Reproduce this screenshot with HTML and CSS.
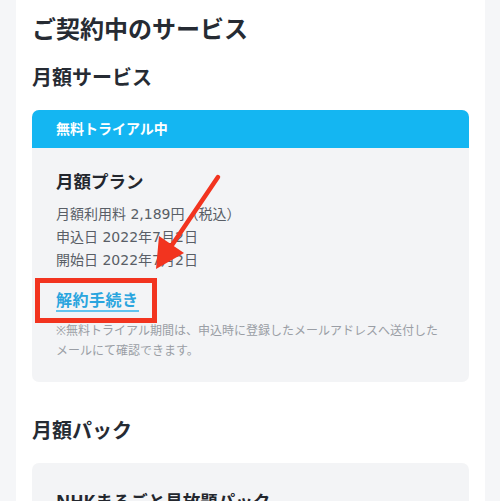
FILE: index.html
```html
<!DOCTYPE html>
<html lang="ja">
<head>
<meta charset="utf-8">
<link rel="stylesheet" href="styles.css">
</head>
<body>
<div class="page">
  <h1 class="title">ご契約中のサービス</h1>
  <h2 class="section">月額サービス</h2>
  <div class="card">
    <div class="card-head">無料トライアル中</div>
    <div class="card-body">
      <div class="plan">月額プラン</div>
      <div class="info">
        <div>月額利用料 2,189円（税込）</div>
        <div>申込日 2022年7月2日</div>
        <div>開始日 2022年7月2日</div>
      </div>
      <a class="cancel">解約手続き</a>
      <p class="note">※無料トライアル期間は、申込時に登録したメールアドレスへ送付したメールにて確認できます。</p>
    </div>
  </div>
  <h2 class="section pack">月額パック</h2>
  <div class="card plain">
    <div class="card-body top">
      <div class="plan">NHKまるごと見放題パック</div>
    </div>
  </div>
</div>
<div class="mark-box"></div>
<svg class="mark-arrow" width="500" height="501" viewBox="0 0 500 501">
  <line x1="218" y1="177" x2="168" y2="251" stroke="#f2341f" stroke-width="4.5" stroke-linecap="round"/>
  <polygon points="156,269 159,236 184,253" fill="#f2341f"/>
</svg>
</body>
</html>
```
FILE: styles.css
```css
html, body {
  margin: 0;
  padding: 0;
}
body {
  background: #f5f6f8;
  font-family: "Noto Sans", "Noto Sans CJK JP", sans-serif;
  color: #262b33;
  width: 500px;
  height: 501px;
  overflow: hidden;
  position: relative;
}
.page {
  margin: 0 15px 0 16px;
  background: #ffffff;
  padding: 13px 16px 0 16px;
  height: 501px;
  overflow: hidden;
  box-sizing: border-box;
}
.title {
  margin: 0;
  font-size: 24px;
  line-height: 32px;
  font-weight: 700;
}
.section {
  margin: 18.5px 0 0 0;
  font-size: 20px;
  line-height: 28px;
  font-weight: 700;
}
.section.pack {
  margin-top: 34.5px;
}
.card {
  margin-top: 18.5px;
  background: #f3f4f6;
  border-radius: 7px;
  overflow: hidden;
}
.card-head {
  background: #14b6f2;
  color: #ffffff;
  height: 38px;
  line-height: 38px;
  padding-left: 24px;
  font-size: 14px;
  font-weight: 700;
}
.card-body {
  padding: 20px 24px 21px 24px;
}
.card-body.top {
  padding-top: 25px;
}
.plan {
  font-size: 17.5px;
  line-height: 26px;
  font-weight: 700;
  color: #23272e;
}
.info {
  margin-top: 8.5px;
  font-family: "DejaVu Sans", "Noto Sans CJK JP", sans-serif;
  font-size: 14px;
  line-height: 23px;
  color: #595e66;
}
.cancel {
  display: inline-block;
  margin-top: 18px;
  font-size: 16px;
  line-height: 20px;
  font-weight: 700;
  color: #2aa5de;
  border-bottom: 2px solid #62c4ef;
  letter-spacing: 0.5px;
}
.note {
  margin: 9.5px 0 0 0;
  font-size: 12px;
  line-height: 20px;
  color: #9a9ea5;
}
.mark-box {
  position: absolute;
  left: 35px;
  top: 278px;
  width: 122px;
  height: 45px;
  box-sizing: border-box;
  border: 5px solid #f2341f;
}
.mark-arrow {
  position: absolute;
  left: 0;
  top: 0;
}
```
